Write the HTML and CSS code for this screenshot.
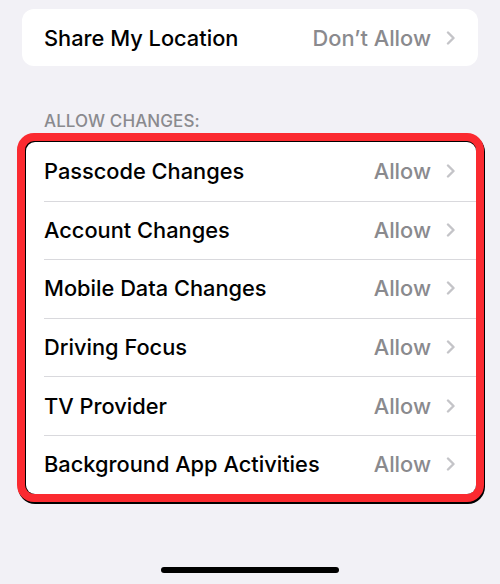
FILE: index.html
```html
<!DOCTYPE html>
<html>
<head>
<meta charset="utf-8">
<link rel="stylesheet" href="styles.css">
</head>
<body>
<div class="screen">
  <div class="card top-card">
    <div class="row">
      <span class="label">Share My Location</span>
      <span class="value">Don’t Allow</span>
      <svg class="chev" viewBox="0 0 10 14" width="10" height="14"><path d="M2 1.5 L7.5 7 L2 12.5" fill="none" stroke="#c4c4c8" stroke-width="2.4" stroke-linecap="round" stroke-linejoin="round"/></svg>
    </div>
  </div>

  <div class="section-header">ALLOW CHANGES:</div>

  <div class="highlight">
    <div class="card list-card">
      <div class="row"><span class="label">Passcode Changes</span><span class="value">Allow</span><svg class="chev" viewBox="0 0 10 14" width="10" height="14"><path d="M2 1.5 L7.5 7 L2 12.5" fill="none" stroke="#c4c4c8" stroke-width="2.4" stroke-linecap="round" stroke-linejoin="round"/></svg></div>
      <div class="row"><span class="label">Account Changes</span><span class="value">Allow</span><svg class="chev" viewBox="0 0 10 14" width="10" height="14"><path d="M2 1.5 L7.5 7 L2 12.5" fill="none" stroke="#c4c4c8" stroke-width="2.4" stroke-linecap="round" stroke-linejoin="round"/></svg></div>
      <div class="row"><span class="label">Mobile Data Changes</span><span class="value">Allow</span><svg class="chev" viewBox="0 0 10 14" width="10" height="14"><path d="M2 1.5 L7.5 7 L2 12.5" fill="none" stroke="#c4c4c8" stroke-width="2.4" stroke-linecap="round" stroke-linejoin="round"/></svg></div>
      <div class="row"><span class="label">Driving Focus</span><span class="value">Allow</span><svg class="chev" viewBox="0 0 10 14" width="10" height="14"><path d="M2 1.5 L7.5 7 L2 12.5" fill="none" stroke="#c4c4c8" stroke-width="2.4" stroke-linecap="round" stroke-linejoin="round"/></svg></div>
      <div class="row"><span class="label">TV Provider</span><span class="value">Allow</span><svg class="chev" viewBox="0 0 10 14" width="10" height="14"><path d="M2 1.5 L7.5 7 L2 12.5" fill="none" stroke="#c4c4c8" stroke-width="2.4" stroke-linecap="round" stroke-linejoin="round"/></svg></div>
      <div class="row"><span class="label">Background App Activities</span><span class="value">Allow</span><svg class="chev" viewBox="0 0 10 14" width="10" height="14"><path d="M2 1.5 L7.5 7 L2 12.5" fill="none" stroke="#c4c4c8" stroke-width="2.4" stroke-linecap="round" stroke-linejoin="round"/></svg></div>
    </div>
  </div>

  <div class="spacer"></div>
  <div class="home-bar"></div>
</div>
</body>
</html>
```

FILE: styles.css
```css
* { box-sizing: border-box; }
html, body {
  margin: 0;
  padding: 0;
  background: #f2f1f6;
}
.screen {
  width: 500px;
  height: 584px;
  display: flex;
  flex-direction: column;
  padding-top: 9px;
  font-family: Inter, "Liberation Sans", sans-serif;
  -webkit-font-smoothing: antialiased;
}
.card {
  background: #ffffff;
}
.top-card {
  margin: 0 22px;
  height: 57px;
  border-radius: 12px;
  display: flex;
}
.top-card .row {
  flex: 1;
  padding: 0 22px 0 22px;
}
.row {
  display: flex;
  align-items: center;
  height: 58.6px;
  padding: 0 20px 0 18px;
  position: relative;
}
.label {
  flex: 1;
  font-size: 21.8px;
  font-weight: 500;
  letter-spacing: 0;
  color: #000;
}
.value {
  font-size: 21.8px;
  font-weight: 500;
  letter-spacing: 0;
  color: #8a8a8e;
  margin-right: 15px;
}
.chev { display: block; }
.section-header {
  margin: 47px 0 0 44px;
  font-size: 17px;
  font-weight: 500;
  letter-spacing: 0.1px;
  color: #8a8a8e;
  line-height: 16px;
}
.highlight {
  margin: 4px 16px 0 17px;
  border: 8px solid #fb2a30;
  border-radius: 17px;
  box-shadow: 1px 2px 0 #000;
  background: #000;
  padding: 1px 0 0 1px;
}
.list-card {
  border-radius: 9px;
  overflow: hidden;
}
.list-card .row + .row::before {
  content: "";
  position: absolute;
  left: 18px;
  right: 0;
  top: 0;
  height: 1px;
  background: #d9d9dd;
}
.spacer { flex: 1; }
.home-bar {
  align-self: center;
  width: 178px;
  height: 6px;
  border-radius: 3px;
  background: #000;
  margin-bottom: 11px;
}
```
